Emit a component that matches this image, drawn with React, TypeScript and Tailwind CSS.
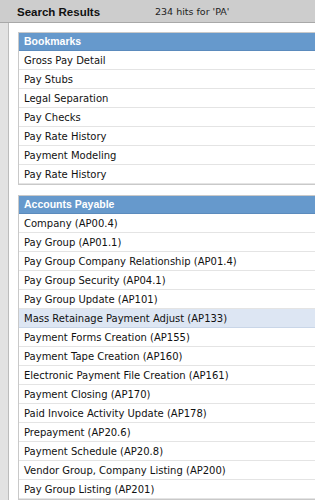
const bookmarks = [
  'Gross Pay Detail',
  'Pay Stubs',
  'Legal Separation',
  'Pay Checks',
  'Pay Rate History',
  'Payment Modeling',
  'Pay Rate History',
];

const payables = [
  'Company (AP00.4)',
  'Pay Group (AP01.1)',
  'Pay Group Company Relationship (AP01.4)',
  'Pay Group Security (AP04.1)',
  'Pay Group Update (AP101)',
  'Mass Retainage Payment Adjust (AP133)',
  'Payment Forms Creation (AP155)',
  'Payment Tape Creation (AP160)',
  'Electronic Payment File Creation (AP161)',
  'Payment Closing (AP170)',
  'Paid Invoice Activity Update (AP178)',
  'Prepayment (AP20.6)',
  'Payment Schedule (AP20.8)',
  'Vendor Group, Company Listing (AP200)',
  'Pay Group Listing (AP201)',
];

function Section({ title, items, active }: { title: string; items: string[]; active?: number }) {
  return (
    <div className="border border-r-0 border-[#c9c9c9]">
      <div className="h-[18px] bg-[#6699cc] border-b border-[#5b8bbd] pl-[5px] flex items-center text-white font-bold text-[10.5px] font-['Liberation_Sans',Arial,sans-serif]">
        {title}
      </div>
      {items.map((item, i) => (
        <div
          key={i}
          className={
            i === active
              ? 'h-[19px] bg-[#dde6f3] border-b border-[#c9d6e8] pl-[5px] flex items-center text-[10px] text-[#111]'
              : 'h-[19px] bg-white border-b border-[#e4e4e4] pl-[5px] flex items-center text-[10px] text-[#111]'
          }
        >
          {item}
        </div>
      ))}
    </div>
  );
}

export default function App() {
  return (
    <div
      className="w-[315px] h-[500px] overflow-hidden bg-white flex flex-col"
      style={{ fontFamily: '"DejaVu Sans", Verdana, sans-serif' }}
    >
      <div className="h-[23px] shrink-0 bg-[#cdcdcd] border-b border-[#a8a8a8] flex items-center pt-[3px]">
        <span className="pl-[17px] w-[155px] font-bold text-[11.5px] text-[#111] font-['Liberation_Sans',Arial,sans-serif]">
          Search Results
        </span>
        <span className="text-[9.5px] text-[#222]">234 hits for 'PA'</span>
      </div>
      <div className="flex flex-1 min-h-0">
        <div className="w-[9px] shrink-0 bg-[#e2e2e2] border-r border-[#bcbcbc]" />
        <div className="flex-1 pl-[9px] pt-[9px] flex flex-col gap-[10px]">
          <Section title="Bookmarks" items={bookmarks} />
          <Section title="Accounts Payable" items={payables} active={5} />
        </div>
      </div>
    </div>
  );
}
